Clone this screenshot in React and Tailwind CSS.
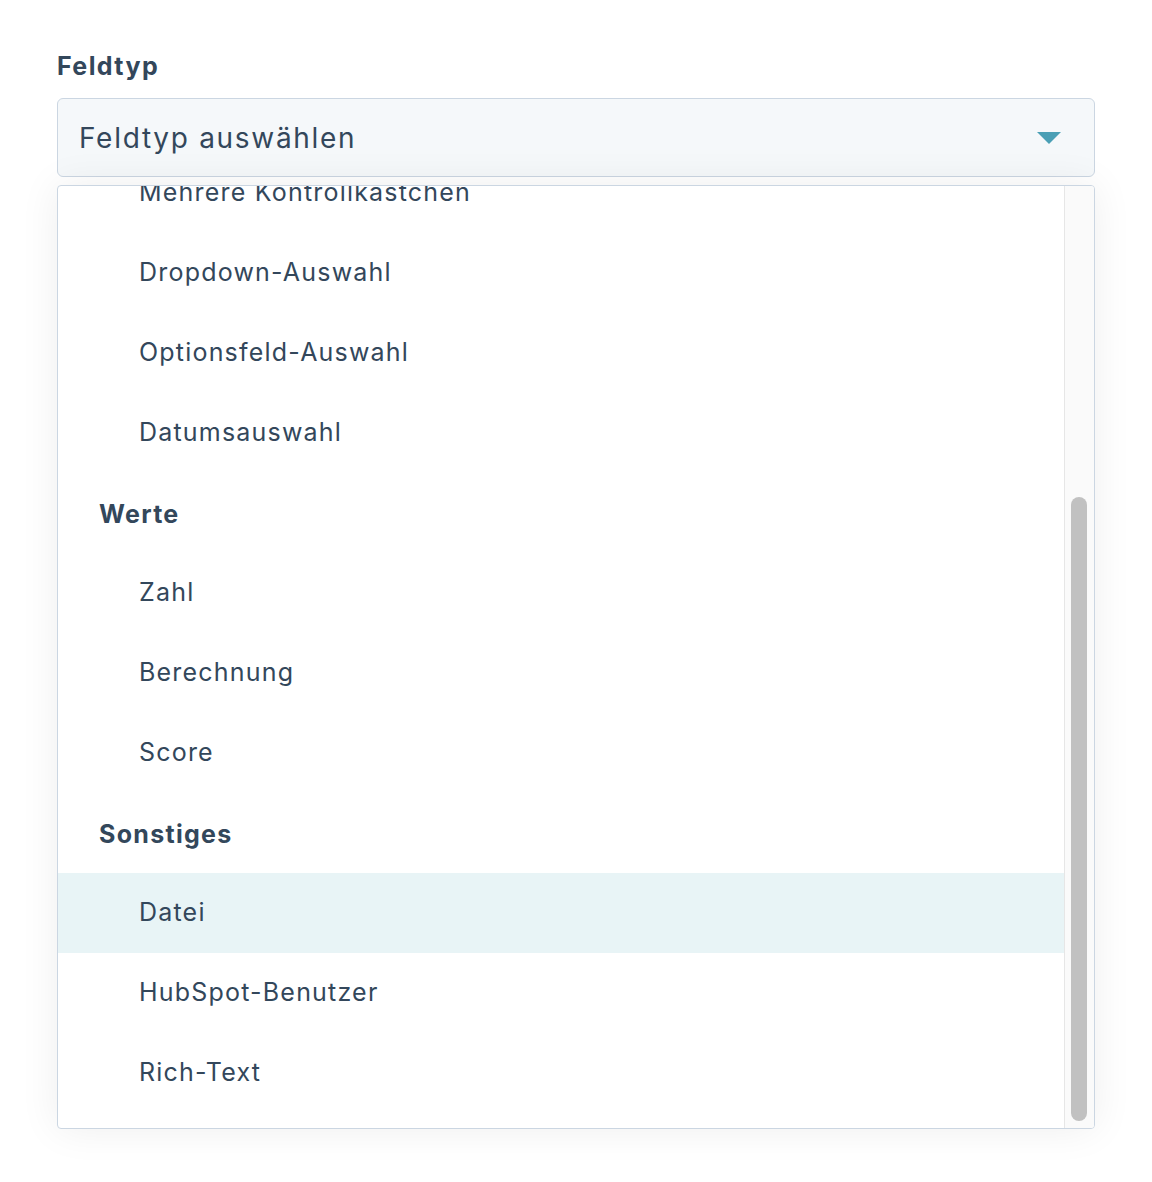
const groups = [
  { items: ['Mehrere Kontrollkästchen', 'Dropdown-Auswahl', 'Optionsfeld-Auswahl', 'Datumsauswahl'] },
  { label: 'Werte', items: ['Zahl', 'Berechnung', 'Score'] },
  { label: 'Sonstiges', items: ['Datei', 'HubSpot-Benutzer', 'Rich-Text'] },
];

const font = { fontFamily: 'Inter, "Noto Sans", sans-serif' };

const App = () => {
  return (
    <div className="min-h-[1182px] bg-white px-[57px] pt-[49px] text-[#33475b]" style={font}>
      <label className="block text-[25px] font-bold leading-[34px] tracking-[1.4px]">Feldtyp</label>

      <div className="mt-[15px] flex h-[79px] items-center justify-between rounded-[6px] border border-[#cbd6e2] bg-[#f5f8fa] pl-[21px] pr-[33px]">
        <span className="text-[28px] tracking-[1.7px]">Feldtyp auswählen</span>
        <svg width="24" height="12" viewBox="0 0 24 12">
          <path d="M0 0 H24 L12 12 Z" fill="#4a9fb5" />
        </svg>
      </div>

      <div className="mt-[8px] flex h-[944px] overflow-hidden rounded-[4px] border border-[#cbd6e2] bg-white shadow-[0_0_40px_rgba(0,0,0,0.07)]">
        <div className="flex-1 overflow-hidden">
          <div className="-mt-[33px]">
            {groups.map((g, gi) => (
              <div key={gi}>
                {g.label && (
                  <div className="flex h-[80px] items-center pl-[41px] pt-[4px] text-[25px] font-bold tracking-[1.3px]">{g.label}</div>
                )}
                {g.items.map(it => (
                  <div
                    key={it}
                    className={`flex h-[80px] items-center pl-[81px] text-[25px] tracking-[1.2px] ${it === 'Datei' ? 'bg-[#e8f4f6]' : ''}`}
                  >
                    {it}
                  </div>
                ))}
              </div>
            ))}
          </div>
        </div>
        <div className="w-[30px] border-l border-[#e6e6e6] bg-[#fafafa] pl-[6px] pt-[311px] pb-[7px]">
          <div className="h-full w-[16px] rounded-full bg-[#c1c1c1]" />
        </div>
      </div>
    </div>
  );
};

export default App;
